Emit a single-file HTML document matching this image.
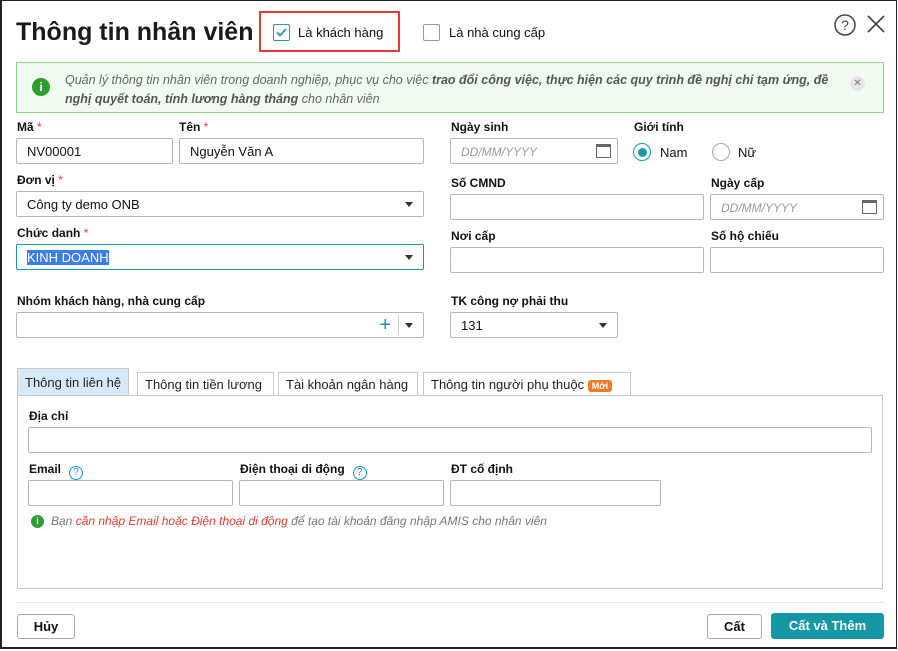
<!DOCTYPE html>
<html><head><meta charset="utf-8"><style>
*{box-sizing:border-box;margin:0;padding:0}
body{width:898px;height:651px;background:#fff;font-family:"Liberation Sans",sans-serif;color:#111;position:relative;overflow:hidden}
.a{position:absolute}
.frame{left:0;top:0;width:897px;height:649px;border:1px solid #222;border-left-width:2px;border-bottom-width:2px}
.lbl{position:absolute;font-size:12px;font-weight:bold;color:#111}
.req{color:#e53935;font-weight:normal}
.in{position:absolute;border:1px solid #b8b8b8;border-radius:2px;height:26px;font-size:13px;padding:5px 10px;color:#111;background:#fff}
.ph{color:#999;font-style:italic;font-size:12px}
.dd::after{content:"";position:absolute;right:10px;top:10px;border-left:4.5px solid transparent;border-right:4.5px solid transparent;border-top:5px solid #333}
.tab{position:absolute;top:372px;height:24px;border:1px solid #c8c8c8;border-bottom:none;font-size:13px;padding:4px 7px;background:#fff;color:#222;white-space:nowrap;overflow:hidden}
.cal{position:absolute;right:6px;top:5px;width:15px;height:14px;border:1px solid #666;border-top-width:3px}
.q{display:inline-block;width:14px;height:14px;border:1px solid #1a8ed8;border-radius:50%;color:#1a8ed8;font-size:10px;text-align:center;line-height:12px;font-weight:normal;margin-left:8px;vertical-align:-2px}
</style></head><body>
<div class="a frame"></div>
<div class="a" style="left:16px;top:18px;font-size:25px;font-weight:bold;color:#1a1a1a">Thông tin nhân viên</div>
<div class="a" style="left:259px;top:11px;width:141px;height:41px;border:2px solid #e53935"></div>
<div class="a" style="left:273px;top:24px;width:17px;height:17px;border:1px solid #1a9aa8;border-radius:2px"></div>
<svg class="a" style="left:275px;top:27px" width="13" height="11"><path d="M2 5.5 L5 8.5 L11 2" stroke="#1a9aa8" stroke-width="1.8" fill="none"/></svg>
<div class="a" style="left:298px;top:25px;font-size:13px">Là khách hàng</div>
<div class="a" style="left:423px;top:24px;width:17px;height:17px;border:1px solid #999;border-radius:2px"></div>
<div class="a" style="left:449px;top:25px;font-size:13px">Là nhà cung cấp</div>
<svg class="a" style="left:833px;top:13px" width="24" height="24"><circle cx="12" cy="12" r="10" stroke="#444" stroke-width="1.5" fill="none"/><text x="12" y="17" font-size="14" text-anchor="middle" fill="#444" font-family="Liberation Sans">?</text></svg>
<svg class="a" style="left:866px;top:14px" width="20" height="20"><path d="M2 2L18 18M18 2L2 18" stroke="#444" stroke-width="1.6"/></svg>
<div class="a" style="left:16px;top:62px;width:868px;height:51px;border:1px solid #8fd88a;background:#f1faf0"></div>
<div class="a" style="left:32px;top:78px;width:18px;height:18px;border-radius:50%;background:#2e9e2e;color:#fff;font-size:12px;font-weight:bold;text-align:center;line-height:18px">i</div>
<div class="a" style="left:65px;top:71px;width:780px;font-size:12.5px;font-style:italic;color:#666;line-height:19px">Quản lý thông tin nhân viên trong doanh nghiệp, phục vụ cho việc <b style="color:#555">trao đổi công việc, thực hiện các quy trình đề nghị chi tạm ứng, đề nghị quyết toán, tính lương hàng tháng</b> cho nhân viên</div>
<div class="a" style="left:850px;top:76px;width:15px;height:15px;border-radius:50%;background:#e6e6e6;color:#777;font-size:10px;text-align:center;line-height:15px">✕</div>

<div class="lbl" style="left:17px;top:120px">Mã <span class="req">*</span></div>
<div class="in" style="left:16px;top:138px;width:157px">NV00001</div>
<div class="lbl" style="left:179px;top:120px">Tên <span class="req">*</span></div>
<div class="in" style="left:179px;top:138px;width:245px">Nguyễn Văn A</div>
<div class="lbl" style="left:17px;top:173px">Đơn vị <span class="req">*</span></div>
<div class="in dd" style="left:16px;top:191px;width:408px">Công ty demo ONB</div>
<div class="lbl" style="left:17px;top:226px">Chức danh <span class="req">*</span></div>
<div class="in dd" style="left:16px;top:244px;width:408px;border-color:#1a9aa8;padding-left:10px"><span style="background:#3b7de9;color:#fff">KINH DOANH</span></div>
<div class="lbl" style="left:17px;top:294px">Nhóm khách hàng, nhà cung cấp</div>
<div class="in dd" style="left:16px;top:312px;width:408px"><span class="a" style="right:32px;top:0;font-size:20px;color:#1a9aa8;line-height:24px">+</span><span class="a" style="right:24px;top:2px;width:1px;height:20px;background:#ccc"></span></div>

<div class="lbl" style="left:451px;top:120px">Ngày sinh</div>
<div class="in ph" style="left:450px;top:138px;width:168px;padding-top:6px">DD/MM/YYYY<span class="cal"></span></div>
<div class="lbl" style="left:634px;top:120px">Giới tính</div>
<div class="a" style="left:633px;top:143px;width:18px;height:18px;border:1.5px solid #1a9aa8;border-radius:50%"></div>
<div class="a" style="left:637.5px;top:147.5px;width:9px;height:9px;background:#1a9aa8;border-radius:50%"></div>
<div class="a" style="left:660px;top:145px;font-size:13px">Nam</div>
<div class="a" style="left:712px;top:143px;width:18px;height:18px;border:1px solid #aaa;border-radius:50%"></div>
<div class="a" style="left:738px;top:145px;font-size:13px">Nữ</div>
<div class="lbl" style="left:451px;top:176px">Số CMND</div>
<div class="in" style="left:450px;top:194px;width:254px"></div>
<div class="lbl" style="left:711px;top:176px">Ngày cấp</div>
<div class="in ph" style="left:710px;top:194px;width:174px;padding-top:6px">DD/MM/YYYY<span class="cal"></span></div>
<div class="lbl" style="left:451px;top:229px">Nơi cấp</div>
<div class="in" style="left:450px;top:247px;width:254px"></div>
<div class="lbl" style="left:711px;top:229px">Số hộ chiếu</div>
<div class="in" style="left:710px;top:247px;width:174px"></div>
<div class="lbl" style="left:451px;top:294px">TK công nợ phải thu</div>
<div class="in dd" style="left:450px;top:312px;width:168px">131</div>

<div class="tab" style="left:17px;top:368px;height:28px;background:#d6e9f8;padding-top:6px">Thông tin liên hệ</div>
<div class="tab" style="left:137px;width:137px">Thông tin tiền lương</div>
<div class="tab" style="left:278px;width:140px">Tài khoản ngân hàng</div>
<div class="tab" style="left:423px;width:208px">Thông tin người phụ thuộc <span style="background:#f07b26;color:#fff;font-size:9px;font-weight:bold;padding:1px 4px;border-radius:3px">Mới</span></div>
<div class="a" style="left:17px;top:395px;width:866px;height:194px;border:1px solid #c8c8c8"></div>
<div class="lbl" style="left:29px;top:409px">Địa chỉ</div>
<div class="in" style="left:28px;top:427px;width:844px"></div>
<div class="lbl" style="left:29px;top:462px">Email<span class="q">?</span></div>
<div class="in" style="left:28px;top:480px;width:205px"></div>
<div class="lbl" style="left:240px;top:462px">Điện thoại di động<span class="q">?</span></div>
<div class="in" style="left:239px;top:480px;width:205px"></div>
<div class="lbl" style="left:451px;top:462px">ĐT cố định</div>
<div class="in" style="left:450px;top:480px;width:211px"></div>
<div class="a" style="left:31px;top:515px;width:13px;height:13px;border-radius:50%;background:#2e9e2e;color:#fff;font-size:9px;font-weight:bold;text-align:center;line-height:13px">i</div>
<div class="a" style="left:51px;top:514px;font-size:12px;font-style:italic;color:#777">Bạn <span style="color:#e53935">cần nhập Email hoặc Điện thoại di động</span> để tạo tài khoản đăng nhập AMIS cho nhân viên</div>

<div class="a" style="left:16px;top:602px;width:868px;height:1px;background:#e3e3e3"></div>
<div class="a" style="left:17px;top:614px;width:58px;height:25px;border:1px solid #aaa;border-radius:3px;font-size:13px;font-weight:bold;text-align:center;line-height:23px">Hủy</div>
<div class="a" style="left:707px;top:614px;width:55px;height:25px;border:1px solid #aaa;border-radius:3px;font-size:13px;font-weight:bold;text-align:center;line-height:23px">Cất</div>
<div class="a" style="left:771px;top:613px;width:113px;height:26px;background:#1597a5;border-radius:3px;color:#fff;font-size:13px;font-weight:bold;text-align:center;line-height:26px">Cất và Thêm</div>
</body></html>
